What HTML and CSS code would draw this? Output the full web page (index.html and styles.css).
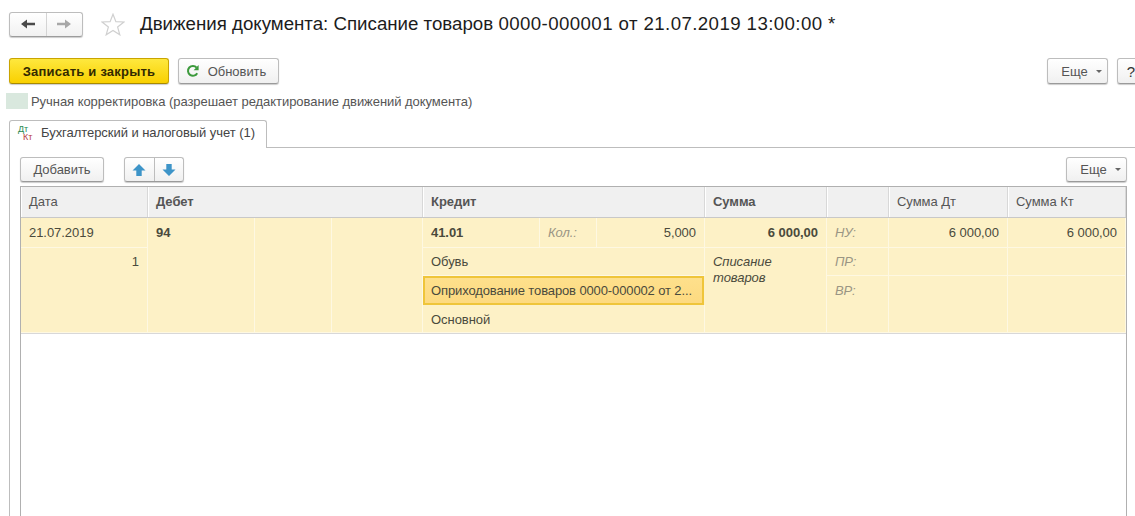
FILE: index.html
```html
<!DOCTYPE html>
<html lang="ru">
<head>
<meta charset="utf-8">
<title>Движения документа</title>
<link rel="stylesheet" href="styles.css">
</head>
<body>
<div class="page">
  <header class="titlebar">
    <div class="nav-group">
      <button class="nav-btn"><svg width="16" height="12" viewBox="0 0 16 12"><path d="M1 6 L7 1.5 V4.7 H15 V7.3 H7 V10.5 Z" fill="#4a4a4a"/></svg></button>
      <button class="nav-btn"><svg width="16" height="12" viewBox="0 0 16 12"><path d="M15 6 L9 1.5 V4.7 H1 V7.3 H9 V10.5 Z" fill="#a8a8a8"/></svg></button>
    </div>
    <svg class="star" width="24" height="23" viewBox="0 0 24 23"><path d="M12 1.2 L14.9 8.6 L22.9 9 L16.6 14 L18.8 21.8 L12 17.4 L5.2 21.8 L7.4 14 L1.1 9 L9.1 8.6 Z" fill="#fff" stroke="#d0d0d0" stroke-width="1.2"/></svg>
    <h1 class="title">Движения документа: Списание товаров <span class="digits">0000-000001 от 21.07.2019 13:00:00 *</span></h1>
  </header>

  <div class="toolbar">
    <button class="btn btn-primary">Записать и закрыть</button>
    <button class="btn btn-refresh"><svg width="14" height="14" viewBox="0 0 14 14"><path d="M11.2 9.2 A4.9 4.9 0 1 1 10.6 3.6" fill="none" stroke="#3c9a3c" stroke-width="2"/><path d="M12.6 1 V6.2 H7.6 Z" fill="#3c9a3c"/></svg>Обновить</button>
    <div class="spacer"></div>
    <button class="btn btn-more">Еще<span class="caret"></span></button>
    <button class="btn btn-help">?</button>
  </div>

  <label class="check-row"><span class="check"></span>Ручная корректировка (разрешает редактирование движений документа)</label>

  <div class="tabs">
    <div class="tab"><span class="tab-icon"><span class="dt">Дт</span><span class="kt">Кт</span></span>Бухгалтерский и налоговый учет (1)</div>
    <div class="tab-rest"></div>
  </div>

  <section class="panel">
    <div class="table-tools">
      <button class="btn btn-add">Добавить</button>
      <div class="move-group">
        <button class="move-btn"><svg width="14" height="14" viewBox="0 0 14 14"><path d="M7 1 L13.5 7.5 H9.7 V13 H4.3 V7.5 H0.5 Z" fill="#3d94c8"/></svg></button>
        <button class="move-btn"><svg width="14" height="14" viewBox="0 0 14 14"><path d="M7 13 L13.5 6.5 H9.7 V1 H4.3 V6.5 H0.5 Z" fill="#3d94c8"/></svg></button>
      </div>
      <div class="spacer"></div>
      <button class="btn btn-more2">Еще<span class="caret"></span></button>
    </div>

    <div class="table">
      <div class="grid head">
        <div class="th c-date">Дата</div>
        <div class="th c-deb b">Дебет</div>
        <div class="th c-kr b">Кредит</div>
        <div class="th c-sum b">Сумма</div>
        <div class="th c-lab"></div>
        <div class="th c-dt">Сумма Дт</div>
        <div class="th c-kt">Сумма Кт</div>
      </div>
      <div class="grid body">
        <div class="td c-date r1">21.07.2019</div>
        <div class="td r1-4 col2 b">94</div>
        <div class="td r1-4 col3"></div>
        <div class="td r1-4 col4"></div>
        <div class="td r1 col5 b">41.01</div>
        <div class="td r1 col6 lab">Кол.:</div>
        <div class="td r1 col7 num">5,000</div>
        <div class="td r1 c-sum num b">6 000,00</div>
        <div class="td r1 c-lab lab">НУ:</div>
        <div class="td r1 c-dt num">6 000,00</div>
        <div class="td r1 c-kt num">6 000,00</div>

        <div class="td r2-4 c-date num">1</div>
        <div class="td r2 c-kr">Обувь</div>
        <div class="td r2-4 c-sum note">Списание товаров</div>
        <div class="td r2 c-lab lab">ПР:</div>
        <div class="td r2 c-dt"></div>
        <div class="td r2 c-kt"></div>

        <div class="td r3 c-kr active">Оприходование товаров 0000-000002 от 2...</div>
        <div class="td r3-4 c-lab lab">ВР:</div>
        <div class="td r3-4 c-dt"></div>
        <div class="td r3-4 c-kt"></div>

        <div class="td r4 c-kr">Основной</div>
      </div>
    </div>
  </section>
</div>
</body>
</html>
```
FILE: styles.css
```css
* { box-sizing: border-box; }
html, body { margin: 0; height: 100%; }
body { background: #fff; overflow: hidden; font: 13px "Liberation Sans", Arial, sans-serif; letter-spacing: -0.05px; color: #4d4d4d; }
.page { width: 1135px; height: 516px; display: flex; flex-direction: column; overflow: hidden; }
button { font: inherit; letter-spacing: inherit; color: inherit; padding: 0; margin: 0; }

.titlebar { display: flex; align-items: center; height: 36px; padding: 12px 0 0 9px; flex: none; }
.nav-group { display: flex; width: 74px; height: 25px; border: 1px solid #bdbdbd; border-bottom-color: #9c9c9c; border-radius: 3px; background: linear-gradient(#fff, #f1f1f1); box-shadow: 0 1px 1px #ccc; }
.nav-btn { flex: 1; border: 0; background: none; display: flex; align-items: center; justify-content: center; }
.nav-btn + .nav-btn { border-left: 1px solid #d4d4d4; }
.star { margin-left: 18px; flex: none; }
.title { margin: 0 0 0 15px; font-size: 18.7px; letter-spacing: 0; font-weight: 400; color: #1c1c1c; white-space: nowrap; }
.digits { letter-spacing: 0.4px; }

.toolbar { display: flex; align-items: center; flex: none; height: 26px; margin-top: 22px; padding-left: 9px; gap: 9px; white-space: nowrap; }
.spacer { flex: 1; }
.btn { height: 26px; border: 1px solid #bdbdbd; border-bottom-color: #9a9a9a; border-radius: 3px; background: linear-gradient(#fff, #f0f0f0); box-shadow: 0 1px 1px #ccc; color: #555; display: flex; align-items: center; justify-content: center; flex: none; }
.btn-primary { width: 160px; background: linear-gradient(#fee83e, #f9d000); border-color: #c9a400; border-bottom-color: #a88a00; color: #332a00; font-weight: 700; letter-spacing: 0.2px; }
.btn-refresh { width: 101px; gap: 8px; padding-right: 5px; }
.btn-more { width: 61px; padding-left: 8px; }
.btn-help { width: 28px; margin-right: -10px; color: #333; font-size: 15px; }
.caret { width: 0; height: 0; border: 3px solid transparent; border-top: 3px solid #666; border-bottom: 0; margin-left: 8px; }

.check-row { display: flex; align-items: center; flex: none; height: 16px; margin: 9px 0 0 6px; color: #555; }
.check { width: 22px; height: 16px; background: #d9e8de; margin-right: 3px; }

.tabs { display: flex; flex: none; height: 28px; margin: 11px 0 0 9px; }
.tab { width: 258px; height: 28px; border: 1px solid #bdbdbd; border-bottom: 0; border-radius: 3px 3px 0 0; display: flex; align-items: center; padding: 0 0 4px 8px; background: #fff; color: #444; }
.tab-rest { flex: 1; border-bottom: 1px solid #bdbdbd; }
.tab-icon { position: relative; width: 17px; height: 16px; margin-right: 6px; font-size: 9px; line-height: 8px; letter-spacing: 0; }
.dt { position: absolute; left: 0; top: 0; color: #1f8a50; }
.kt { position: absolute; left: 5px; top: 8px; color: #b8403c; }

.panel { flex: 1; min-height: 0; margin-left: 9px; border-left: 1px solid #bdbdbd; padding: 9px 8px 0 10px; display: flex; flex-direction: column; }
.table-tools { display: flex; align-items: center; flex: none; height: 25px; }
.table-tools .btn { height: 25px; }
.btn-add { width: 84px; }
.move-group { display: flex; width: 60px; height: 25px; margin-left: 20px; border: 1px solid #bdbdbd; border-bottom-color: #9a9a9a; border-radius: 3px; background: linear-gradient(#fff, #f0f0f0); box-shadow: 0 1px 1px #ccc; }
.move-btn { flex: 1; border: 0; background: none; display: flex; align-items: center; justify-content: center; }
.move-btn + .move-btn { border-left: 1px solid #bdbdbd; }
.btn-more2 { width: 61px; padding-left: 8px; }

.table { flex: 1; margin-top: 4px; border: 1px solid #b0b0b0; border-bottom: 0; }
.grid { display: grid; grid-template-columns: 127px 107px 77px 91px 117px 57px 108px 122px 62px 119px 118px; }
.head { height: 31px; background: #f0f0f0; border-bottom: 1px solid #c8c8c8; }
.th { display: flex; align-items: center; padding: 0 8px 2px; border-right: 1px solid #d8d8d8; box-shadow: inset 1px 0 0 #fff; color: #555; }
.body { grid-template-rows: 30px 28px 29px 28px; border-bottom: 1px solid #d8d8d8; background: #fdf1c6; }
.td { padding: 0 8px; background: #fdf1c6; border-right: 1px solid #fef8e2; border-bottom: 1px solid #fef8e2; color: #4a4a3c; white-space: nowrap; min-width: 0; }
.r1, .r1-4 { line-height: 29px; }
.r2, .r2-4 { line-height: 27px; }
.r3, .r3-4 { line-height: 29px; }
.r4 { line-height: 29px; }
.b { font-weight: 700; }
.num { text-align: right; padding-right: 8px; }
.lab { font-style: italic; color: #9a9584; }
.note { font-style: italic; white-space: normal; line-height: 16px; padding-top: 6px; }
.active { background: linear-gradient(#fee08c, #fdda80); border: 2px solid #efc53a; padding: 0 0 0 6px; line-height: 25px; margin-right: 1px; letter-spacing: -0.12px; }

.c-date { grid-column: 1; }
.c-deb { grid-column: 2 / 5; }
.c-kr { grid-column: 5 / 8; }
.c-sum { grid-column: 8; }
.c-lab { grid-column: 9; }
.c-dt { grid-column: 10; }
.c-kt { grid-column: 11; }
.col2 { grid-column: 2; }
.col3 { grid-column: 3; }
.col4 { grid-column: 4; }
.col5 { grid-column: 5; }
.col6 { grid-column: 6; }
.col7 { grid-column: 7; }
.r1 { grid-row: 1; }
.r2 { grid-row: 2; }
.r3 { grid-row: 3; }
.r4 { grid-row: 4; }
.r1-4 { grid-row: 1 / 5; }
.r2-4 { grid-row: 2 / 5; }
.r3-4 { grid-row: 3 / 5; }
```
